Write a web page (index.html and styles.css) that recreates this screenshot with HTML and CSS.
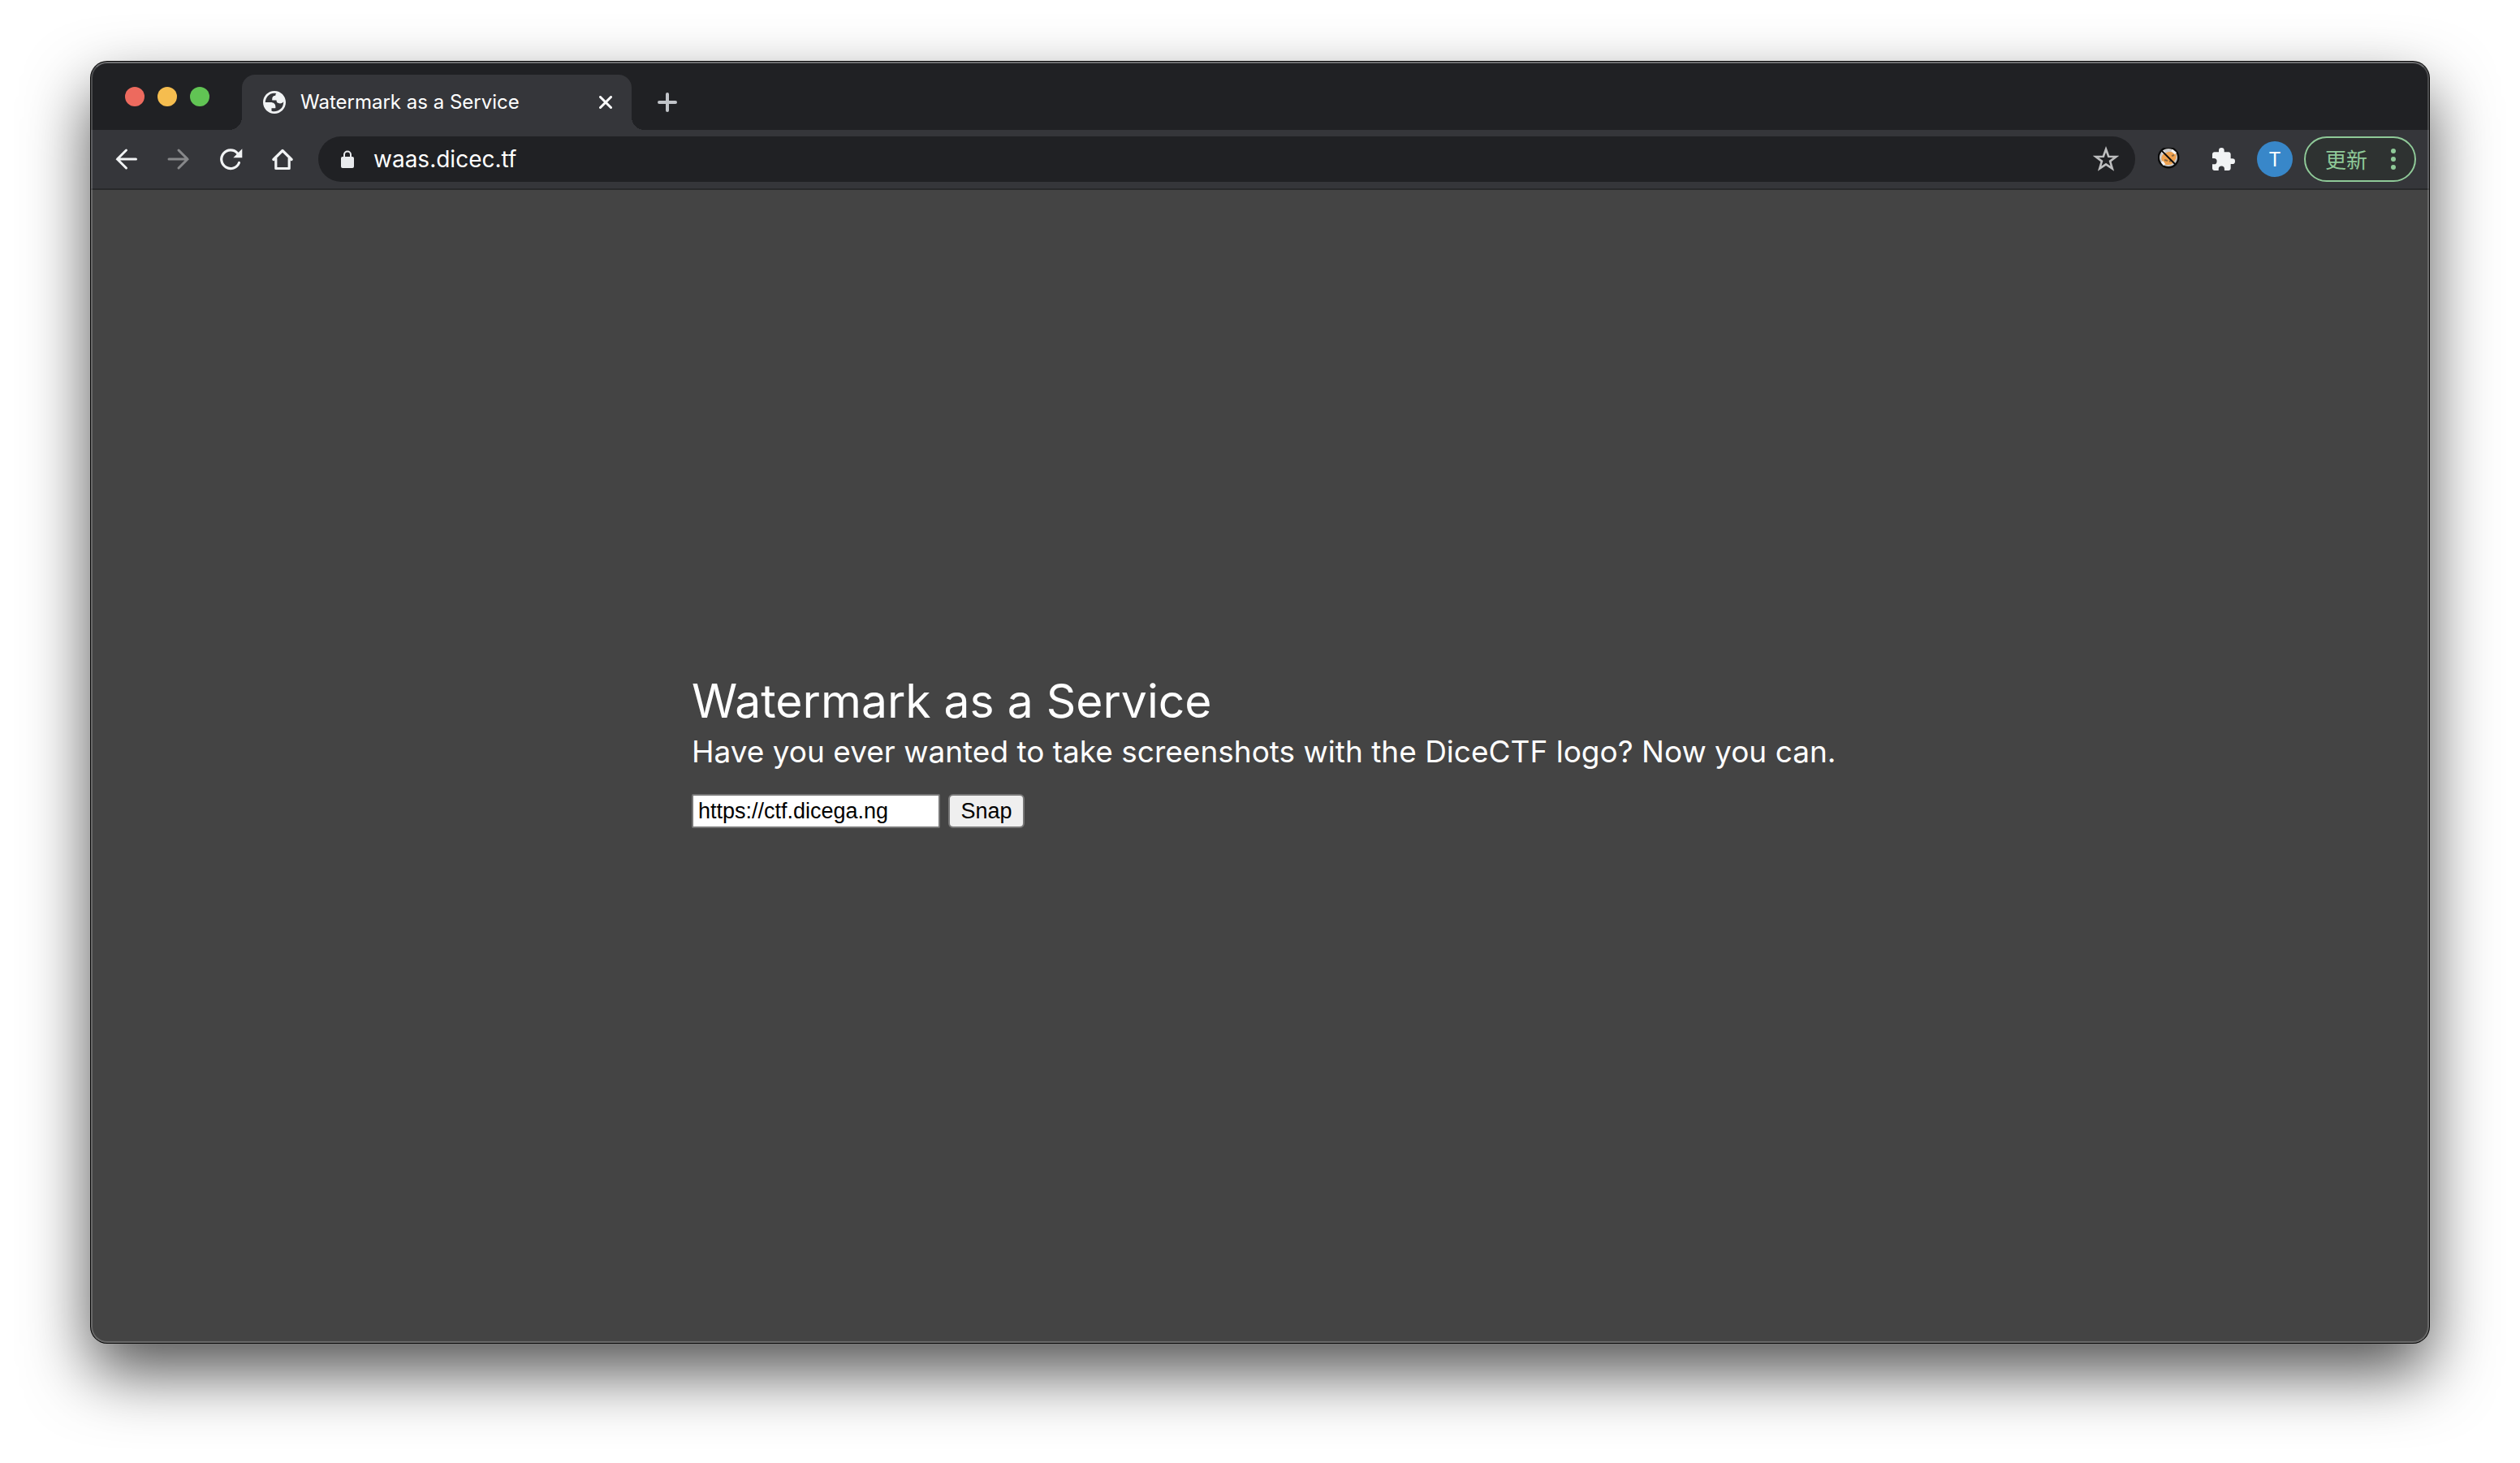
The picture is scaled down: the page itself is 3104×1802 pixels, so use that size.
FILE: index.html
```html
<!DOCTYPE html>
<html lang="en">
<head>
<meta charset="utf-8">
<title>Watermark as a Service</title>
<link rel="stylesheet" href="styles.css">
</head>
<body>
<div class="window">
  <header class="tabstrip">
    <div class="lights">
      <button class="light light-close" aria-label="Close window"></button>
      <button class="light light-min" aria-label="Minimize window"></button>
      <button class="light light-max" aria-label="Zoom window"></button>
    </div>
    <div class="tab">
      <svg class="favicon" viewBox="2 2 20 20" aria-hidden="true"><path fill="#f1f3f4" fill-rule="evenodd" d="M12 2C6.480 2 2 6.480 2 12s4.480 10 10 10 10-4.480 10-10S17.520 2 12 2zM4 12h4.400c3.407.022 4.922 1.730 4.543 5.127H9.488v2.470a8.004 8.004 0 0 0 10.498-8.083C19.327 12.504 18.332 13 17 13c-2.137 0-3.206-.916-3.206-2.750h-3.748c-.274-2.728.683-4.092 2.870-4.092 0-.975.327-1.597.811-1.970A8.004 8.004 0 0 0 4 12z"/></svg>
      <span class="tab-title">Watermark as a Service</span>
      <button class="icon-btn" aria-label="Close tab"><svg class="i16" viewBox="0 0 16 16"><path d="M1.500 1.500l13 13M14.500 1.500l-13 13" stroke="#fff" stroke-width="3" stroke-linecap="round"/></svg></button>
    </div>
    <button class="icon-btn new-tab" aria-label="New tab"><svg class="i24" viewBox="0 0 24 24"><path d="M12 2v20M2 12h20" stroke="#c1c4c9" stroke-width="4" stroke-linecap="round"/></svg></button>
  </header>
  <nav class="toolbar">
    <button class="icon-btn nav-btn" aria-label="Back"><svg class="i32" viewBox="0 0 32 32" fill="none" stroke="#f1f3f4" stroke-width="3" stroke-linecap="round"><path d="M15.500 5L4.500 16l11 11M4.500 16h23"/></svg></button>
    <button class="icon-btn nav-btn" aria-label="Forward"><svg class="i32" viewBox="0 0 32 32" fill="none" stroke="#87888a" stroke-width="3" stroke-linecap="round"><path d="M16 5l11 11-11 11M27 16H4"/></svg></button>
    <button class="icon-btn nav-btn" aria-label="Reload"><svg class="i32" viewBox="0 0 32 32" fill="none"><path d="M26.500 20.500A11.300 11.300 0 1 1 24.500 8.700" stroke="#f1f3f4" stroke-width="3.200" stroke-linecap="round"/><path d="M30.300 3.300v11H19.300z" fill="#f1f3f4"/></svg></button>
    <button class="icon-btn nav-btn" aria-label="Home"><svg class="i32" viewBox="0 0 32 32" fill="none" stroke="#f1f3f4" stroke-width="3.200" stroke-linejoin="round" stroke-linecap="round"><path d="M4.800 16.500L16 5.500l11.200 11M7.800 15v12.500h16.400V15"/></svg></button>
    <div class="omnibox">
      <svg class="lock" viewBox="0 0 16 22" aria-hidden="true"><path d="M4 9V5.500a4 4 0 0 1 8 0V9" fill="none" stroke="#e8eaed" stroke-width="2"/><rect y="8" width="16" height="14" rx="2" fill="#e8eaed"/></svg>
      <input class="url" type="text" aria-label="Address" value="waas.dicec.tf">
      <button class="icon-btn" aria-label="Bookmark this tab"><svg class="i32" viewBox="0 0 32 32"><path d="M16 3.800l3.200 8.900 9.300.3-7.400 5.600 2.700 9.100-7.800-5.300-7.800 5.300 2.700-9.100L3.500 13l9.300-.3z" fill="none" stroke="#bdbebf" stroke-width="2.600"/></svg></button>
    </div>
    <button class="icon-btn ext" aria-label="Extension"><svg class="i28" viewBox="1 2 28 28"><circle cx="14" cy="14" r="12.200" fill="#c9c9c9" stroke="#0c0c0c" stroke-width="2.400"/><path d="M6 18c-2-4 1-9 4-9 3-3 8-2 13-1 1 4 1 7-1 9-2 5-5 6-9 6-4 0-6-2-7-5z" fill="#f0a24f"/><path d="M6 9l3-3M18 5l5 4M6 19l3 4" stroke="#f3f3f3" stroke-width="3"/><path d="M9 17l4 1M18 12l3-1M15 19l2-1" stroke="#8a6a45" stroke-width="2"/><path d="M5 5l18 18" stroke="#0c0c0c" stroke-width="2"/></svg></button>
    <button class="icon-btn ext" aria-label="Extensions"><svg class="i28" viewBox="2 1 21 21"><path fill="#f1f3f4" d="M20.500 11H19V7c0-1.100-.9-2-2-2h-4V3.500a2.500 2.500 0 0 0-5 0V5H4c-1.100 0-2 .9-2 2v3.800h1.500a2.700 2.700 0 0 1 0 5.400H2V20c0 1.100.9 2 2 2h3.800v-1.500a2.700 2.700 0 0 1 5.400 0V22H17c1.100 0 2-.9 2-2v-4h1.500a2.500 2.500 0 0 0 0-5z"/></svg></button>
    <button class="avatar" aria-label="Profile T">T</button>
    <button class="update"><span>更新</span><svg class="dots" viewBox="0 0 6 26" aria-hidden="true"><g fill="#8fc998"><circle cx="3" cy="3" r="3"/><circle cx="3" cy="13" r="3"/><circle cx="3" cy="23" r="3"/></g></svg></button>
  </nav>
  <main class="page">
    <form class="card">
      <h1>Watermark as a Service</h1>
      <p>Have you ever wanted to take screenshots with the DiceCTF logo? Now you can.</p>
      <div class="row">
        <input class="field" type="text" aria-label="Website address" value="https://ctf.dicega.ng">
        <button class="snap" type="button">Snap</button>
      </div>
    </form>
  </main>
</div>
</body>
</html>
```

FILE: styles.css
```css
* { box-sizing: border-box; }

body {
  margin: 0;
  min-height: 100vh;
  padding: 76px 112px 148px;
  display: flex;
  background: #fff;
  color: #fff;
  font-family: Inter, "Liberation Sans", sans-serif;
}

button { font: inherit; color: inherit; border: 0; padding: 0; margin: 0; background: none; }
svg { display: block; }

.window {
  position: relative;
  flex: 1;
  display: flex;
  flex-direction: column;
  border-radius: 20px;
  overflow: hidden;
  background: #444;
  box-shadow: 0 0 0 1px #060606, 0 36px 80px rgba(0, 0, 0, 0.68);
}

/* light rim drawn over the window contents */
.window::after {
  content: "";
  position: absolute;
  inset: 0;
  border: 2px solid rgba(255, 255, 255, 0.2);
  border-top-color: rgba(255, 255, 255, 0.35);
  border-radius: 20px;
  pointer-events: none;
}

.tabstrip {
  height: 84px;
  padding: 16px 0 0 42px;
  display: flex;
  background: #202124;
}

.lights { display: flex; gap: 16px; padding-top: 15px; width: 144px; }
.light { width: 24px; height: 24px; border-radius: 50%; }
.light-close { background: #ed6a5e; }
.light-min { background: #f5bd4f; }
.light-max { background: #61c454; }

.tab {
  position: relative;
  width: 480px;
  padding: 0 24px 0 26px;
  display: flex;
  align-items: center;
  background: #35363a;
  border-radius: 16px 16px 0 0;
}
.tab::before, .tab::after {
  content: "";
  position: absolute;
  bottom: 0;
  width: 16px;
  height: 16px;
}
.tab::before { right: 100%; background: radial-gradient(circle at 0 0, transparent 16px, #35363a 16px); }
.tab::after { left: 100%; background: radial-gradient(circle at 100% 0, transparent 16px, #35363a 16px); }

.favicon { width: 28px; height: 28px; margin-right: 18px; }
.tab-title { flex: 1; font-size: 24px; line-height: 32px; white-space: nowrap; }

.icon-btn { display: flex; align-items: center; justify-content: center; flex: none; }
.new-tab { width: 88px; }
.i16 { width: 16px; height: 16px; }
.i24 { width: 24px; height: 24px; }
.i28 { width: 28px; height: 28px; }
.i32 { width: 32px; height: 32px; }

.toolbar {
  height: 74px;
  padding: 0 16px 0 12px;
  display: flex;
  align-items: center;
  background: #35363a;
  border-bottom: 2px solid #28292b;
}
.nav-btn { width: 64px; height: 56px; }

.omnibox {
  flex: 1;
  height: 56px;
  margin: 0 8px 0 12px;
  padding: 0 20px 0 28px;
  display: flex;
  align-items: center;
  border-radius: 28px;
  background: #202124;
}
.lock { width: 16px; height: 22px; margin-right: 24px; }
.url {
  flex: 1;
  border: 0;
  padding: 0;
  background: none;
  color: #fff;
  font: 28px/36px Inter, "Liberation Sans", sans-serif;
}

.ext { width: 67px; height: 56px; }
.avatar {
  width: 44px;
  height: 44px;
  margin: 0 14px 0 8px;
  border-radius: 50%;
  background: #3887c9;
  font-size: 24px;
}
.update {
  width: 138px;
  height: 56px;
  padding: 0 23px 0 24px;
  display: flex;
  align-items: center;
  justify-content: space-between;
  border: 2px solid #8fc998;
  border-radius: 28px;
  background: #2e3231;
  color: #8fc998;
  font: 26px/36px "Noto Sans CJK SC", sans-serif;
}
.dots { width: 6px; height: 26px; }

.page {
  flex: 1;
  display: flex;
  align-items: center;
  justify-content: center;
}
.card { width: 1400px; padding-bottom: 42px; }
h1, p { margin: 0; font-weight: 400; white-space: nowrap; }
h1 { font-size: 57px; line-height: 76px; }
p { font-size: 37px; line-height: 48px; }
.row { display: flex; gap: 10px; margin-top: 28px; }
.field, .snap {
  height: 42px;
  border: 2px solid #767676;
  font: 27px/32px "Liberation Sans", Arial, sans-serif;
  color: #000;
}
.field { width: 306px; padding: 0 6px; background: #fff; border-radius: 2px; }
.snap { width: 94px; background: #efefef; border-radius: 6px; }
```
